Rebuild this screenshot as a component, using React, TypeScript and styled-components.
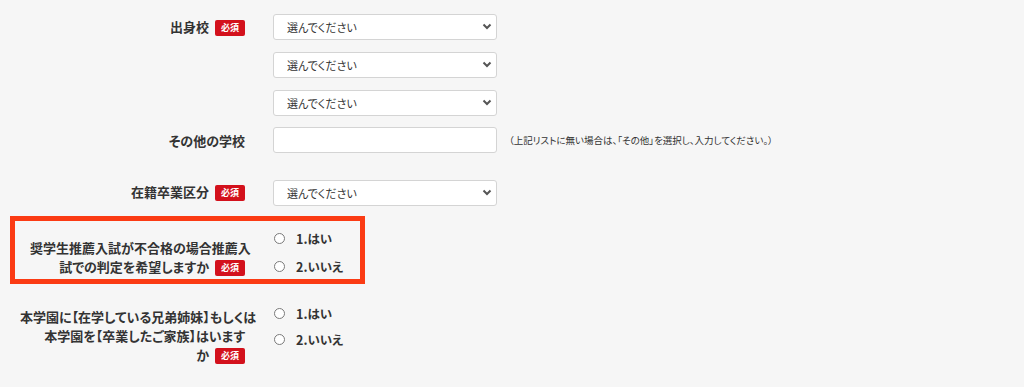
import React from "react";
import styled, { createGlobalStyle } from "styled-components";

const Global = createGlobalStyle`
  html, body {
    margin: 0;
    padding: 0;
    background: #f6f6f6;
  }
  body {
    font-family: "Noto Sans CJK JP", "Noto Sans", sans-serif;
    color: #333;
    font-feature-settings: "palt";
  }
`;

const Form = styled.div`
  width: 1024px;
  height: 387px;
  box-sizing: border-box;
  padding-top: 13px;
  overflow: hidden;
`;

const Row = styled.div<{ $mt?: number }>`
  display: grid;
  grid-template-columns: 245px 1fr;
  column-gap: 28px;
  margin-top: ${(p) => p.$mt ?? 0}px;
`;

const Highlight = styled.div<{ $mt?: number }>`
  display: grid;
  grid-template-columns: 230px 1fr;
  column-gap: 28px;
  margin-top: ${(p) => p.$mt ?? 0}px;
  margin-left: 10px;
  width: 355px;
  box-sizing: border-box;
  border: 5px solid #fb3b14;
  padding: 5px 0 1px;
`;

const Label = styled.div<{ $pt?: number; $pl?: number }>`
  text-align: right;
  font-size: 13px;
  font-weight: 700;
  line-height: 19px;
  color: #333;
  padding-top: ${(p) => p.$pt ?? 0}px;
  padding-left: ${(p) => p.$pl ?? 20}px;
  white-space: nowrap;
  font-feature-settings: "palt";
`;

const Badge = styled.span`
  display: inline-block;
  vertical-align: 1px;
  margin-left: 6px;
  width: 30px;
  height: 16px;
  line-height: 16px;
  border-radius: 2px;
  background: #d3111c;
  color: #fff;
  font-size: 9px;
  font-weight: 700;
  text-align: center;
`;

const Stack = styled.div<{ $gap: number }>`
  display: flex;
  flex-direction: column;
  gap: ${(p) => p.$gap}px;
`;

const SelectWrap = styled.div`
  position: relative;
  width: 224px;
  height: 26px;
`;

const Select = styled.select`
  appearance: none;
  -webkit-appearance: none;
  width: 100%;
  height: 100%;
  box-sizing: border-box;
  border: 1px solid #d4d4d4;
  border-radius: 3px;
  background: #fff;
  padding: 0 24px 0 13px;
  font-family: "Noto Sans CJK JP", sans-serif;
  font-size: 11px;
  color: #333;
  font-feature-settings: "palt";
  outline: none;
`;

const Chevron = styled.svg`
  position: absolute;
  right: 5px;
  top: 10px;
  width: 10px;
  height: 7px;
  pointer-events: none;
`;

const InputLine = styled.div`
  display: flex;
  align-items: center;
  gap: 12px;
`;

const TextInput = styled.input`
  width: 224px;
  height: 26px;
  box-sizing: border-box;
  border: 1px solid #d4d4d4;
  border-radius: 3px;
  background: #fff;
  outline: none;
`;

const Note = styled.span`
  font-size: 9.5px;
  color: #333;
  white-space: nowrap;
  font-feature-settings: "palt";
`;

const RadioItem = styled.label`
  display: flex;
  align-items: center;
  height: 24px;
  gap: 11px;
  font-size: 12.5px;
  font-weight: 700;
  color: #333;
  white-space: nowrap;
`;

const Radio = styled.input`
  appearance: none;
  -webkit-appearance: none;
  margin: 0 0 0 1px;
  width: 11px;
  height: 11px;
  border: 1px solid #7a7a7a;
  border-radius: 50%;
  background: #fff;
  box-sizing: border-box;
`;

const Choose: React.FC = () => (
  <SelectWrap>
    <Select defaultValue="">
      <option value="">選んでください</option>
    </Select>
    <Chevron viewBox="0 0 10 7">
      <path d="M1.5 1.5 L5 5 L8.5 1.5" fill="none" stroke="#555" strokeWidth="2" />
    </Chevron>
  </SelectWrap>
);

const YesNo: React.FC<{ name: string; gap: number }> = ({ name, gap }) => (
  <Stack $gap={gap}>
    <RadioItem>
      <Radio type="radio" name={name} />
      1.はい
    </RadioItem>
    <RadioItem>
      <Radio type="radio" name={name} />
      2.いいえ
    </RadioItem>
  </Stack>
);

export default function App() {
  return (
    <>
      <Global />
      <Form>
        <Row>
          <Label $pt={4}>
            出身校<Badge>必須</Badge>
          </Label>
          <Stack $gap={12}>
            <Choose />
            <Choose />
            <Choose />
          </Stack>
        </Row>
        <Row $mt={12}>
          <Label $pt={4}>その他の学校</Label>
          <InputLine>
            <TextInput type="text" />
            <Note>（上記リストに無い場合は、「その他」を選択し、入力してください。）</Note>
          </InputLine>
        </Row>
        <Row $mt={26}>
          <Label $pt={3}>
            在籍卒業区分<Badge>必須</Badge>
          </Label>
          <Choose />
        </Row>
        <Highlight $mt={11}>
          <Label $pt={12} $pl={15}>
            奨学生推薦入試が不合格の場合推薦入
            <br />
            試での判定を希望しますか<Badge>必須</Badge>
          </Label>
          <YesNo name="q1" gap={4} />
        </Highlight>
        <Row $mt={17}>
          <Label $pt={6}>
            本学園に【在学している兄弟姉妹】もしくは
            <br />
            本学園を【卒業したご家族】はいます
            <br />
            か<Badge>必須</Badge>
          </Label>
          <YesNo name="q2" gap={2} />
        </Row>
      </Form>
    </>
  );
}
